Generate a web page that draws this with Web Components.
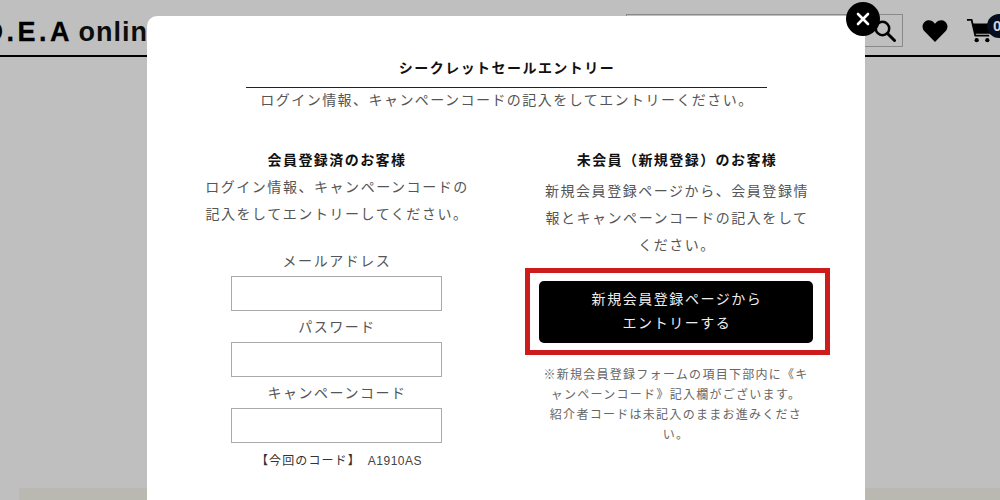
<!DOCTYPE html>
<html lang="ja">
<head>
<meta charset="utf-8">
<title>シークレットセールエントリー</title>
<style>
html,body{margin:0;padding:0;height:100%;overflow:hidden;background:#bfbfbf;}
body{font-family:"Noto Sans CJK JP","Liberation Sans",sans-serif;}
</style>
</head>
<body>
<site-page>
  <site-header slot="header"></site-header>
  <entry-modal slot="overlay">
    <h-title slot="head" sub="ログイン情報、キャンペーンコードの記入をしてエントリーください。">シークレットセールエントリー</h-title>
    <entry-col slot="left" heading="会員登録済のお客様">
      <para-text variant="left">ログイン情報、キャンペーンコードの<br>記入をしてエントリーしてください。</para-text>
      <field-box label="メールアドレス"></field-box>
      <field-box label="パスワード"></field-box>
      <field-box label="キャンペーンコード"></field-box>
      <code-note>【今回のコード】<b>A1910AS</b></code-note>
    </entry-col>
    <entry-col slot="right" heading="未会員（新規登録）のお客様">
      <para-text variant="right">新規会員登録ページから、会員登録情<br>報とキャンペーンコードの記入をして<br>ください。</para-text>
      <cta-button>新規会員登録ページから<br>エントリーする</cta-button>
      <small-note>※新規会員登録フォームの項目下部内に《キ<br>ャンペーンコード》記入欄がございます。<br>紹介者コードは未記入のままお進みくださ<br>い。</small-note>
    </entry-col>
  </entry-modal>
</site-page>
<script>
function def(name, html, init){
  customElements.define(name, class extends HTMLElement{
    connectedCallback(){
      if(this.shadowRoot) return;
      const r=this.attachShadow({mode:'open'});
      r.innerHTML=html;
      if(init) init(this,r);
    }
  });
}
const JP='"Noto Sans CJK JP","Liberation Sans",sans-serif';

def('site-page',`<style>
:host{display:block;position:relative;width:1000px;height:500px;overflow:hidden;background:#bfbfbf;}
.strip{position:absolute;left:19px;right:0;top:488px;bottom:0;background:#b9b9b1;}
</style><slot name="header"></slot><div class="strip"></div><slot name="overlay"></slot>`);

def('site-header',`<style>
:host{display:flex;position:relative;align-items:center;box-sizing:border-box;height:57px;border-bottom:2px solid #000;overflow:hidden;}
.logo{font:bold 27px/1 "Liberation Sans",sans-serif;color:#000;white-space:nowrap;margin:10px 0 0 -16.5px;letter-spacing:3.5px;flex:1;min-width:0;-webkit-text-stroke:.3px #000;}
.logo span{font-size:27px;letter-spacing:1px;color:#0d0d0d;margin-left:-4.5px;-webkit-text-stroke:0;}
.search{box-sizing:border-box;width:277px;height:33px;border:1px solid #8a8a8a;margin:6px 0 0 0;display:flex;justify-content:flex-end;align-items:center;padding-right:6px;flex:none;}
.heart{margin:7px 0 0 19px;display:block;flex:none}
.cart{margin:6px 8px 0 18px;display:block;flex:none}
.badge{position:absolute;left:987px;top:14px;width:24px;height:24px;border-radius:50%;background:#060d1f;color:#cfd3dc;font:bold 15px/24px "Liberation Sans",sans-serif;text-indent:6px;}
</style>
<div class="logo">D.E.A <span>online store</span></div>
<div class="search"><svg width="22" height="22" viewBox="0 0 22 22"><circle cx="8.500" cy="8.500" r="6.700" fill="none" stroke="#000" stroke-width="2.500"/><path d="M13.500 13.500l7 7" stroke="#000" stroke-width="3" stroke-linecap="round"/></svg></div>
<svg class="heart" width="26" height="24" viewBox="0 0 28 26"><path d="M14 25L2.600 13.400C-.6 10 .1 5.200 3 2.900 6.100.5 10.900 1 14 5.200 17.100 1 21.900.5 25 2.900c2.900 2.300 3.600 7.100.4 10.500z" fill="#000"/></svg>
<svg class="cart" width="26" height="25" viewBox="0 0 28 27"><path d="M1 2h5l4 17h15" fill="none" stroke="#000" stroke-width="2"/><path d="M7 6h21l-2 11H10z" fill="#000"/><circle cx="11.500" cy="24" r="2.300" fill="#000"/><circle cx="23" cy="24" r="2.300" fill="#000"/></svg>
<div class="badge">0</div>`);

def('entry-modal',`<style>
:host{display:block;position:absolute;left:147px;top:16px;width:718px;height:520px;background:#fff;border-radius:10px 10px 0 0;box-sizing:border-box;padding-top:41px;font-family:${JP};}
.close{position:absolute;top:-14px;right:-15px;width:34px;height:34px;border-radius:50%;background:#000;display:flex;align-items:center;justify-content:center;}
.cols{display:grid;grid-template-columns:340px 340px;justify-content:center;margin-top:37px;}
</style>
<div class="close"><svg width="14" height="14" viewBox="0 0 14 14"><path d="M2 2l10 10M12 2L2 12" stroke="#fff" stroke-width="2.600" stroke-linecap="round"/></svg></div>
<slot name="head"></slot>
<div class="cols"><slot name="left"></slot><slot name="right"></slot></div>`);

def('h-title',`<style>
:host{display:block;width:521px;margin:0 auto;text-align:center;}
h2{margin:0;font:bold 14px/20px ${JP};letter-spacing:1.45px;color:#111;padding:0 0 10px 2px;border-bottom:1px solid #222;}
p{margin:0;font:14px/22px ${JP};letter-spacing:1.45px;color:#555;white-space:nowrap;padding-left:2px;}
</style><h2><slot></slot></h2><p></p>`,(el,r)=>{r.querySelector('p').textContent=el.getAttribute('sub');});

def('entry-col',`<style>
:host{display:block;text-align:center;}
h3{margin:0 0 2px;padding-left:2px;font:bold 14px/24px ${JP};letter-spacing:1.42px;color:#111;}
</style><h3></h3><slot></slot>`,(el,r)=>{r.querySelector('h3').textContent=el.getAttribute('heading');});

def('para-text',`<style>
:host{display:block;font:14px/27px ${JP};letter-spacing:1.55px;color:#555;white-space:nowrap;padding:0 0 21px 2px;}
:host([variant="right"]){margin-top:6px;padding-bottom:20px;}
</style><slot></slot>`);

def('field-box',`<style>
:host{display:block;text-align:center;}
label{display:block;font:14px/24px ${JP};letter-spacing:1.55px;color:#555;padding:0 0 4px 2px;}
.inp{display:block;box-sizing:border-box;width:211px;height:35px;margin:0 auto 3px;border:1px solid #aaa;background:#fff;}
</style><label></label><div class="inp"></div>`,(el,r)=>{r.querySelector('label').textContent=el.getAttribute('label');});

def('code-note',`<style>
:host{display:block;font:12px/20px ${JP};letter-spacing:1.1px;color:#333;white-space:nowrap;margin-top:7px;padding-left:6px;}
::slotted(b){font:12px/20px "Liberation Sans",sans-serif;letter-spacing:.5px;margin-left:7px;color:#444;}
</style><slot></slot>`);

def('cta-button',`<style>
:host{display:block;box-sizing:border-box;width:305px;height:87px;margin:-10px 0 0 19px;border:5px solid #cc1c1c;background:#fff;padding:8px 12px 7px 9px;}
a{display:flex;align-items:center;justify-content:center;text-align:center;height:100%;background:#000;border-radius:5px;color:#eee;font:14px/24px ${JP};letter-spacing:1.55px;}
span{padding:0 0 4px 2px;}
</style><a><span><slot></slot></span></a>`);

def('small-note',`<style>
:host{display:block;font:12px/20px ${JP};letter-spacing:1.28px;color:#666;white-space:nowrap;margin-top:9px;}
</style><slot></slot>`);
</script>
</body>
</html>
